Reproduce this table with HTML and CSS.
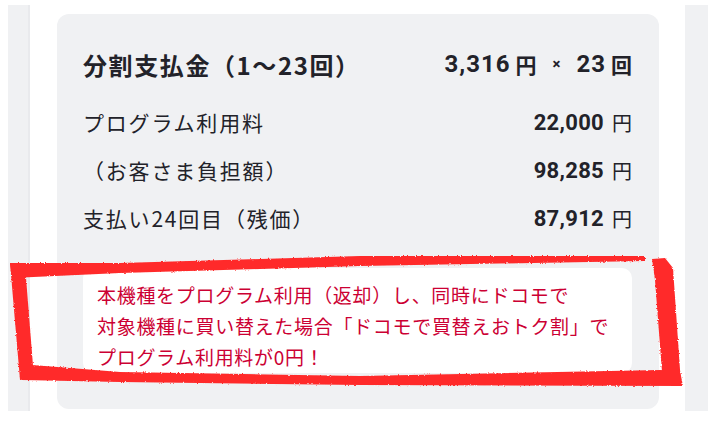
FILE: index.html
```html
<!DOCTYPE html>
<html lang="ja">
<head>
<meta charset="utf-8">
<title>分割支払金</title>
<link rel="stylesheet" href="styles.css">
</head>
<body>
<div class="page">
  <div class="strip strip-left"></div>
  <section class="card">
    <div class="row title-row">
      <span class="label title">分割支払金（1〜23回）</span>
      <span class="value title-value">3,316<span class="unit">円</span><span class="times">×</span>23<span class="unit">回</span></span>
    </div>
    <div class="row">
      <span class="label">プログラム利用料</span>
      <span class="value">22,000<span class="yen">円</span></span>
    </div>
    <div class="row">
      <span class="label">（お客さま負担額）</span>
      <span class="value">98,285<span class="yen">円</span></span>
    </div>
    <div class="row">
      <span class="label">支払い24回目（残価）</span>
      <span class="value">87,912<span class="yen">円</span></span>
    </div>
    <div class="note">
      本機種をプログラム利用（返却）し、同時にドコモで<br>
      対象機種に買い替えた場合「ドコモで買替えおトク割」で<br>
      プログラム利用料が0円！
    </div>
  </section>
  <div class="strip strip-right"></div>
</div>
<svg class="marker" width="720" height="423" viewBox="0 0 720 423" aria-hidden="true">
  <defs>
    <filter id="rough" x="-5%" y="-5%" width="110%" height="110%">
      <feTurbulence type="fractalNoise" baseFrequency="0.6" numOctaves="2" seed="3" result="n"/>
      <feDisplacementMap in="SourceGraphic" in2="n" scale="2.5" xChannelSelector="R" yChannelSelector="G"/>
    </filter>
  </defs>
  <g fill="#ff2b2b" filter="url(#rough)">
    <polygon points="10,263 120,263 360,256 645,256 645,261 360,266 120,273 12,278"/>
    <polygon points="10,263 25,265 34,378 20,380"/>
    <polygon points="20,364 120,372 360,376 660,370 680,371 683,386 360,385 120,382 22,380"/>
    <polygon points="652,259 665,258 673,268 681,384 663,385 655,280"/>
  </g>
</svg>
</body>
</html>
```

FILE: styles.css
```css
* { box-sizing: border-box; }

html, body {
  margin: 0;
  padding: 0;
  background: #ffffff;
}

body {
  width: 720px;
  height: 423px;
  overflow: hidden;
  position: relative;
  font-family: Roboto, "Noto Sans CJK JP", sans-serif;
  color: #222229;
}

.page {
  display: flex;
  align-items: flex-start;
  padding: 5px 12px 0 8px;
}

.strip {
  background: #f0f1f3;
  height: 406px;
}

.strip-left {
  width: 22px;
  border-right: 2px solid #e9eaed;
}

.strip-right {
  width: 23px;
  margin-left: 26px;
}

.card {
  margin-left: 27px;
  margin-top: 9px;
  width: 602px;
  height: 395px;
  background: #f0f1f3;
  border-radius: 12px;
  padding: 30px 27px 0 26px;
  display: flex;
  flex-direction: column;
}

.row {
  display: flex;
  justify-content: space-between;
  align-items: center;
  height: 48px;
}

.title-row {
  height: 40px;
  margin-bottom: 14px;
}

.label {
  font-family: "Noto Sans CJK JP", sans-serif;
  font-size: 21px;
  letter-spacing: 1.8px;
  font-weight: 400;
}

.title {
  font-size: 24px;
  font-weight: 700;
  letter-spacing: 1.6px;
}

.value {
  font-size: 22px;
  font-weight: 700;
  letter-spacing: 0.3px;
  display: flex;
  align-items: center;
}

.title-value {
  font-size: 24px;
  letter-spacing: 1px;
}

.unit {
  font-family: "Noto Sans CJK JP", sans-serif;
  font-size: 21px;
  font-weight: 700;
  margin-left: 5px;
  letter-spacing: 0;
}

.times {
  font-size: 15px;
  font-weight: 700;
  margin: 0 15px 0 16px;
}

.yen {
  font-family: "Noto Sans CJK JP", sans-serif;
  font-size: 20px;
  font-weight: 400;
  margin-left: 8px;
  letter-spacing: 0;
}

.note {
  margin-top: 26px;
  height: 105px;
  background: #ffffff;
  border-radius: 10px;
  padding: 11px 10px 0 14px;
  font-family: "Noto Sans CJK JP", sans-serif;
  font-size: 19px;
  letter-spacing: 0.7px;
  line-height: 31px;
  color: #cc0033;
}

.marker {
  position: absolute;
  left: 0;
  top: 0;
  pointer-events: none;
}
```
